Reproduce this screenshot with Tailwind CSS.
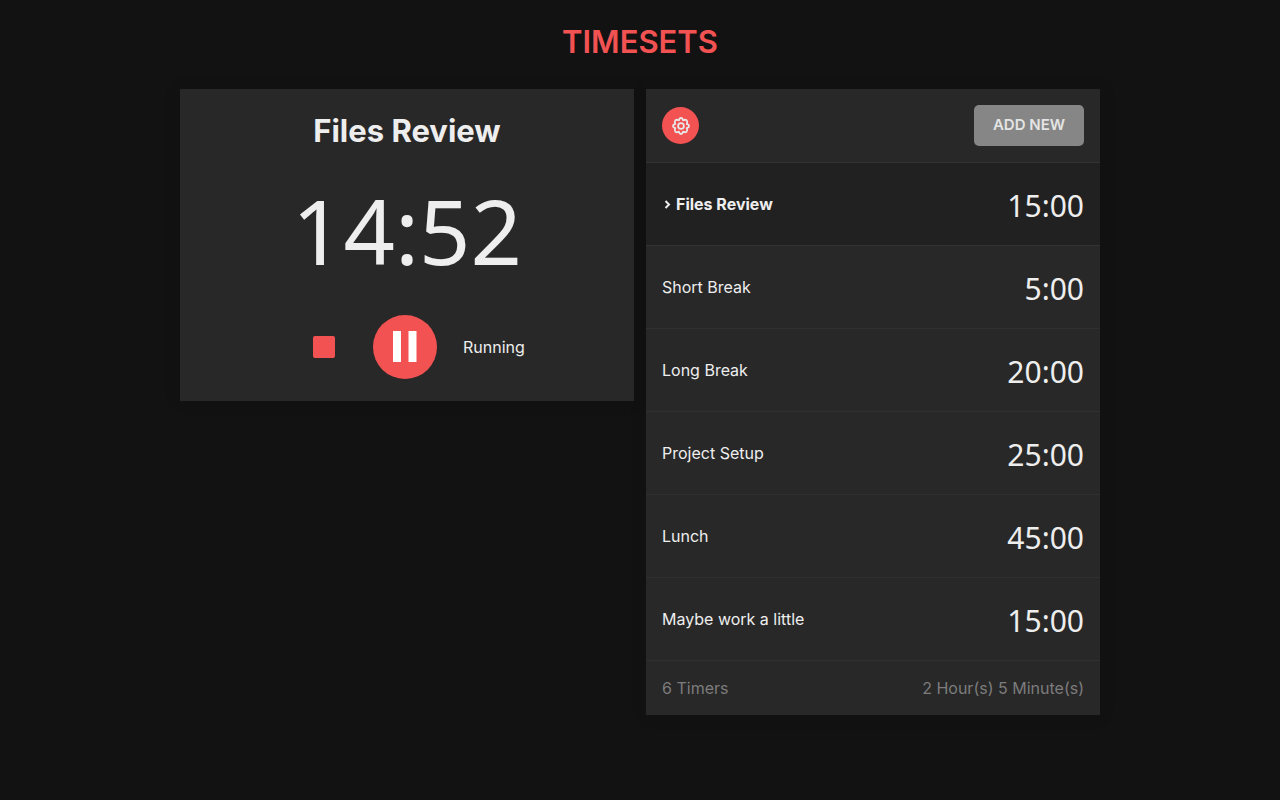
<!DOCTYPE html>
<html lang="en">
<head>
<meta charset="utf-8">
<meta name="viewport" content="width=device-width, initial-scale=1">
<title>Timesets</title>
<script src="https://cdn.jsdelivr.net/npm/@tailwindcss/browser@4"></script>
</head>
<body class="min-h-screen bg-[#121212] font-['Inter','Liberation_Sans',sans-serif] text-base text-[#eeeeee]">
<header class="pt-5 pb-[26px] text-center">
  <h1 class="text-[31px] leading-[43px] font-semibold text-[#f25252]">TIMESETS</h1>
</header>
<main class="mx-auto grid max-w-[920px] grid-cols-1 items-start gap-3 md:grid-cols-2">
  <section class="flex flex-col items-center bg-[#282828] pt-5 pb-[22px] shadow-[0_0_16px_rgba(0,0,0,0.12)]">
    <h2 class="text-[31px] leading-[43px] font-bold">Files Review</h2>
    <p class="mt-[13px] font-['Noto_Sans',sans-serif] text-[90px] leading-[130px]">14:52</p>
    <div class="mt-5 grid w-full grid-cols-[1fr_64px_1fr] items-center pr-1">
      <button aria-label="Stop" class="mr-[38px] size-[22px] justify-self-end rounded-xs bg-[#f25252]"></button>
      <button aria-label="Pause" class="flex size-16 items-center justify-center rounded-full bg-[#f25252] pb-0.5">
        <svg class="h-[31px] w-6" viewBox="0 0 24 31" fill="#fff" aria-hidden="true"><path d="M0 0h8v31H0zM15.500 0h8v31h-8z"/></svg>
      </button>
      <span class="ml-[26px]">Running</span>
    </div>
  </section>
  <section class="bg-[#282828] shadow-[0_0_16px_rgba(0,0,0,0.12)]">
    <div class="flex items-center justify-between border-b border-[#333333] p-4">
      <button aria-label="Settings" class="flex size-[37px] items-center justify-center rounded-full bg-[#f25252]">
        <svg class="size-[18px]" viewBox="0 0 18 18" fill="none" stroke="#e8e8e8" stroke-width="1.8" stroke-linejoin="round" aria-hidden="true"><path d="M6.900 3.300C7.300 2.600 7.100 1 9 1S10.700 2.600 11.100 3.300C11.900 3.100 13.300 2 14.650 3.350S14.900 6.100 14.700 6.900C15.400 7.300 17 7.100 17 9S15.400 10.700 14.700 11.100C14.900 11.900 16 13.300 14.650 14.650S11.900 14.900 11.100 14.700C10.700 15.400 10.900 17 9 17S7.300 15.400 6.900 14.700C6.100 14.900 4.700 16 3.350 14.650S3.100 11.900 3.300 11.100C2.600 10.700 1 10.900 1 9S2.600 7.300 3.300 6.900C3.100 6.100 2 4.700 3.350 3.350S6.100 3.100 6.900 3.300Z"/><circle cx="9" cy="9" r="2.900"/></svg>
      </button>
      <button class="h-[41px] w-[110px] rounded-[5px] bg-[#868686] text-[15px] font-semibold text-[#e4e4e4]">ADD NEW</button>
    </div>
    <ul>
      <li class="flex h-[83px] items-center justify-between border-b border-[#333333] bg-[#212121] px-4"><span class="flex items-center gap-1 font-bold"><svg class="w-[10px] h-3" viewBox="0 0 10 12" fill="none" stroke="currentColor" stroke-width="2" aria-hidden="true"><path d="M3.500 3l3.500 3.500-3.500 3.500"/></svg>Files Review</span><span class="pt-1 font-['Noto_Sans',sans-serif] text-3xl">15:00</span></li>
      <li class="flex h-[83px] items-center justify-between border-b border-[#303030] px-4"><span>Short Break</span><span class="pt-1 font-['Noto_Sans',sans-serif] text-3xl">5:00</span></li>
      <li class="flex h-[83px] items-center justify-between border-b border-[#303030] px-4"><span>Long Break</span><span class="pt-1 font-['Noto_Sans',sans-serif] text-3xl">20:00</span></li>
      <li class="flex h-[83px] items-center justify-between border-b border-[#303030] px-4"><span>Project Setup</span><span class="pt-1 font-['Noto_Sans',sans-serif] text-3xl">25:00</span></li>
      <li class="flex h-[83px] items-center justify-between border-b border-[#303030] px-4"><span>Lunch</span><span class="pt-1 font-['Noto_Sans',sans-serif] text-3xl">45:00</span></li>
      <li class="flex h-[83px] items-center justify-between border-b border-[#303030] px-4"><span>Maybe work a little</span><span class="pt-1 font-['Noto_Sans',sans-serif] text-3xl">15:00</span></li>
    </ul>
    <footer class="flex h-[54px] items-center justify-between px-4 text-[#7c7c7c]"><span>6 Timers</span><span>2 Hour(s) 5 Minute(s)</span></footer>
  </section>
</main>
</body>
</html>
